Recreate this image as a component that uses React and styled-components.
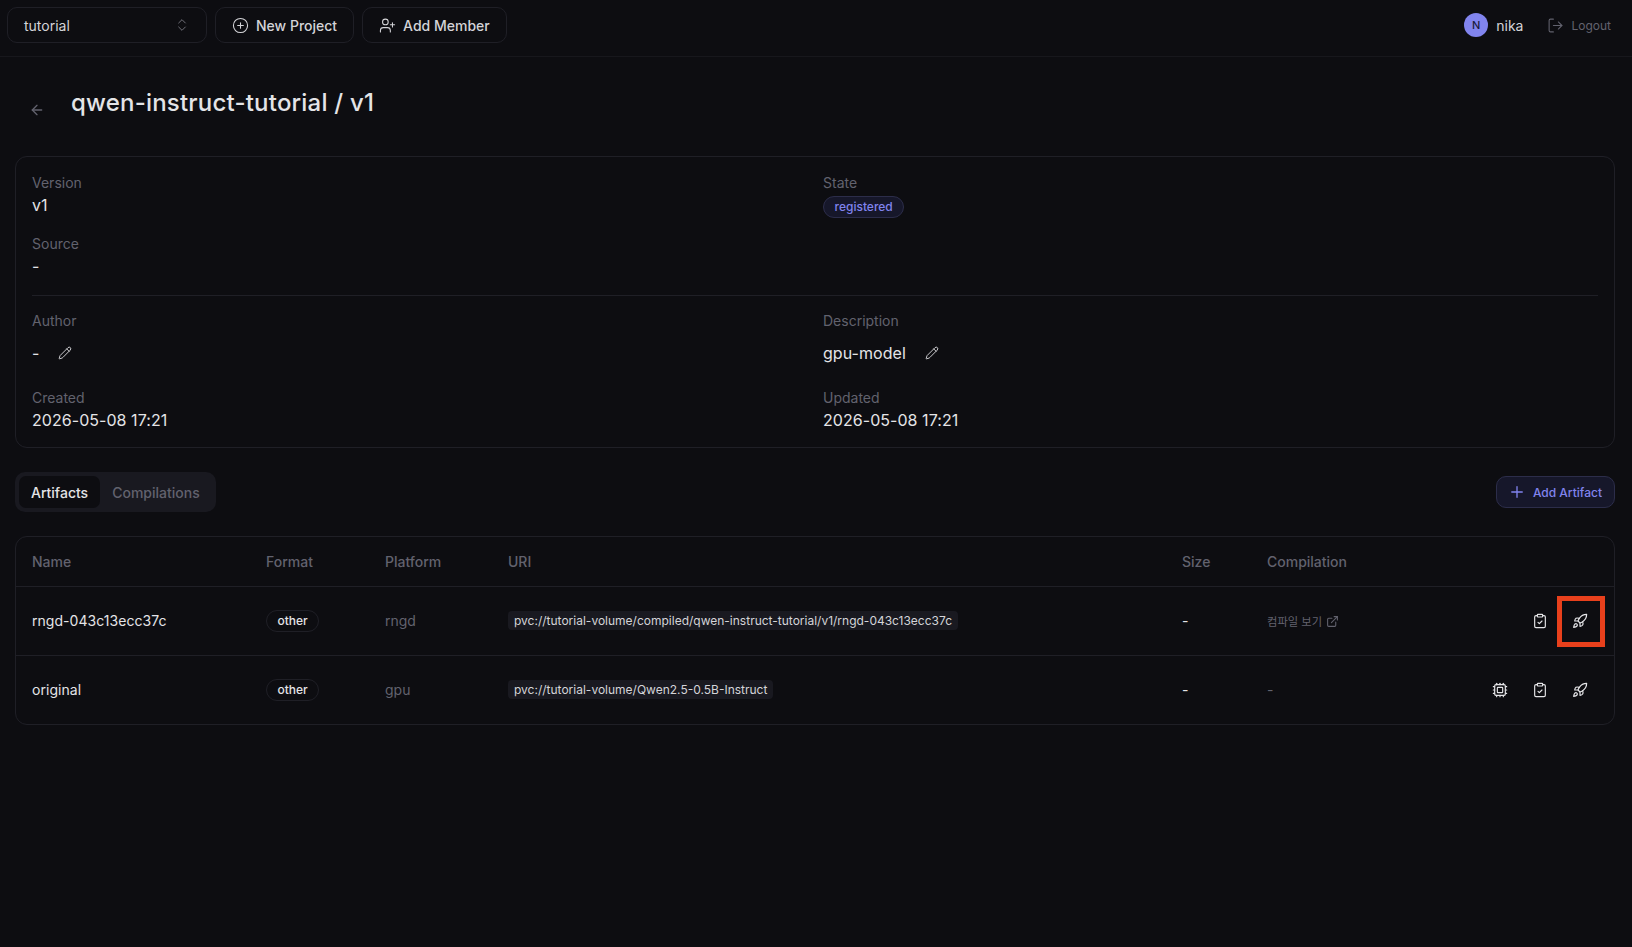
import React from 'react';
import styled, { createGlobalStyle } from 'styled-components';
import {
  ArrowLeft,
  ChevronsUpDown,
  CirclePlus,
  ClipboardCheck,
  Cpu,
  ExternalLink,
  LogOut,
  Pencil,
  Plus,
  Rocket,
  UserPlus,
} from 'lucide-react';

const GlobalStyle = createGlobalStyle`
  html, body {
    margin: 0;
    min-height: 100%;
    background: #0d0d11;
    color: #e4e4e7;
    font-family: Inter, "Noto Sans CJK KR", sans-serif;
  }
  * { box-sizing: border-box; }
`;

const Page = styled.div`
  min-height: 947px;
  background: #0d0d11;
`;

const TopBar = styled.header`
  height: 57px;
  padding: 0 21px 6px 7px;
  display: flex;
  align-items: center;
  gap: 8px;
  border-bottom: 1px solid #17171c;
`;

const BarButton = styled.button`
  height: 36px;
  padding: 0 16px;
  display: flex;
  align-items: center;
  gap: 7px;
  background: transparent;
  border: 1px solid #1f1f26;
  border-radius: 10px;
  color: #d4d4d8;
  font: 500 14px Inter, sans-serif;
`;

const ProjectSelect = styled(BarButton)`
  width: 200px;
  justify-content: space-between;
  font-weight: 400;
`;

const UserBox = styled.div`
  margin-left: auto;
  display: flex;
  align-items: center;
  font-size: 14px;
  color: #d4d4d8;
`;

const Avatar = styled.span`
  width: 24px;
  height: 24px;
  margin-right: 8px;
  border-radius: 50%;
  background: #8184ee;
  color: #1b1b3a;
  display: flex;
  align-items: center;
  justify-content: center;
  font-size: 11px;
  font-weight: 500;
`;

const Logout = styled.span`
  margin-left: 24px;
  display: flex;
  align-items: center;
  gap: 7px;
  color: #62626e;
  font-size: 12px;
`;

const Main = styled.main`
  padding: 0 17px 0 15px;
`;

const TitleRow = styled.div`
  height: 99px;
  padding: 28px 0 0 14px;
  display: flex;
  gap: 26px;
`;

const BackIcon = styled(ArrowLeft)`
  margin-top: 17px;
  color: #62626e;
  flex: none;
`;

const Title = styled.h1`
  margin: 0;
  font-size: 24px;
  line-height: 36px;
  font-weight: 500;
  letter-spacing: 0.2px;
  color: #e4e4e7;
`;

const Card = styled.section`
  height: 292px;
  padding: 16px;
  border: 1px solid #1f1f26;
  border-radius: 12px;
`;

const InfoGrid = styled.div`
  display: grid;
  grid-template-columns: 1fr 1fr;
  column-gap: 16px;
`;

const Divider = styled.hr`
  margin: 16px 0 15px;
  border: 0;
  border-top: 1px solid #1f1f26;
`;

const Field = styled.div`
  height: ${(p) => p.$height}px;
`;

const Label = styled.div`
  font-size: 14px;
  line-height: 20px;
  color: #62626e;
`;

const Value = styled.div`
  font-size: 16px;
  line-height: 24px;
  letter-spacing: 0.05px;
  color: #e4e4e7;
`;

const EditRow = styled(Value)`
  margin-top: 10px;
  display: flex;
  align-items: center;
  gap: 19px;
`;

const StateBadge = styled.span`
  display: inline-block;
  margin-top: 3px;
  padding: 0 10.5px;
  height: 22px;
  line-height: 20px;
  border: 1px solid #2c2d4a;
  border-radius: 11px;
  background: #16172a;
  color: #8184ee;
  font-size: 12px;
  font-weight: 500;
`;

const TabRow = styled.div`
  margin-top: 24px;
  display: flex;
  align-items: center;
  justify-content: space-between;
`;

const Tabs = styled.div`
  height: 40px;
  padding: 4px;
  display: flex;
  background: #191920;
  border-radius: 10px;
`;

const Tab = styled.div`
  padding: 0 12px;
  display: flex;
  align-items: center;
  border-radius: 7px;
  font-size: 14px;
  font-weight: 500;
  color: ${(p) => (p.$active ? '#e4e4e7' : '#62626e')};
  background: ${(p) => (p.$active ? '#0d0d11' : 'transparent')};
`;

const AddArtifact = styled.button`
  height: 32px;
  padding: 0 12px 0 11px;
  display: flex;
  align-items: center;
  gap: 7px;
  background: #16172a;
  border: 1px solid #2c2d4a;
  border-radius: 10px;
  color: #8184ee;
  font: 500 12px Inter, sans-serif;
`;

const TableBox = styled.div`
  margin-top: 24px;
  border: 1px solid #1f1f26;
  border-radius: 12px;
  overflow: hidden;
`;

const Table = styled.table`
  width: 100%;
  border-collapse: collapse;
  table-layout: fixed;
`;

const HeadCell = styled.th`
  height: 49px;
  padding: 0 16px;
  text-align: left;
  font-size: 14px;
  font-weight: 500;
  color: #62626e;
  border-bottom: 1px solid #1f1f26;
`;

const Row = styled.tr`
  height: 69px;
  & + & td {
    border-top: 1px solid #1f1f26;
  }
`;

const Cell = styled.td`
  padding: 0 16px;
  font-size: 14px;
  color: ${(p) => (p.$muted ? '#62626e' : '#e4e4e7')};
`;

const NameCell = styled(Cell)`
  letter-spacing: 0.05px;
`;

const FormatBadge = styled.span`
  display: inline-block;
  height: 22px;
  padding: 0 10.5px;
  line-height: 20px;
  border: 1px solid #1f1f26;
  border-radius: 11px;
  font-size: 12px;
  font-weight: 500;
  color: #e4e4e7;
`;

const UriChip = styled.code`
  display: inline-block;
  height: 19px;
  padding: 0 6px;
  line-height: 19px;
  background: #191920;
  border-radius: 4px;
  font: 400 12px/19px Inter, sans-serif;
  color: #d4d4d8;
`;

const CompileLink = styled.span`
  display: inline-flex;
  align-items: center;
  gap: 4px;
  font-size: 11.3px;
  color: #62626e;
`;

const Actions = styled.div`
  display: flex;
  justify-content: flex-end;
  gap: 8px;
  margin-right: 3px;
`;

const IconButton = styled.span`
  position: relative;
  width: 32px;
  height: 32px;
  display: flex;
  align-items: center;
  justify-content: center;
  color: #e4e4e7;
`;

const Highlight = styled.span`
  position: absolute;
  left: -7px;
  top: -9px;
  width: 48px;
  height: 51px;
  border: 5px solid #e8401c;
`;

const artifacts = [
  {
    name: 'rngd-043c13ecc37c',
    platform: 'rngd',
    uri: 'pvc://tutorial-volume/compiled/qwen-instruct-tutorial/v1/rngd-043c13ecc37c',
    compiled: true,
  },
  {
    name: 'original',
    platform: 'gpu',
    uri: 'pvc://tutorial-volume/Qwen2.5-0.5B-Instruct',
    compiled: false,
  },
];

const columns = [
  { label: 'Name', width: 234 },
  { label: 'Format', width: 119 },
  { label: 'Platform', width: 123 },
  { label: 'URI', width: 674 },
  { label: 'Size', width: 85 },
  { label: 'Compilation', width: 200 },
  { label: '', width: 164 },
];

const App = () => (
  <Page>
    <GlobalStyle />
    <TopBar>
      <ProjectSelect>
        tutorial
        <ChevronsUpDown size={16} color="#71717a" strokeWidth={1.5} />
      </ProjectSelect>
      <BarButton>
        <CirclePlus size={17} strokeWidth={1.5} />
        New Project
      </BarButton>
      <BarButton>
        <UserPlus size={17} strokeWidth={1.5} />
        Add Member
      </BarButton>
      <UserBox>
        <Avatar>N</Avatar>
        nika
        <Logout>
          <LogOut size={17} strokeWidth={1.5} />
          Logout
        </Logout>
      </UserBox>
    </TopBar>
    <Main>
      <TitleRow>
        <BackIcon size={16} />
        <Title>qwen-instruct-tutorial / v1</Title>
      </TitleRow>
      <Card>
        <InfoGrid>
          <div>
            <Field $height={61}>
              <Label>Version</Label>
              <Value>v1</Value>
            </Field>
            <Field $height={45}>
              <Label>Source</Label>
              <Value>-</Value>
            </Field>
          </div>
          <Field>
            <Label>State</Label>
            <StateBadge>registered</StateBadge>
          </Field>
        </InfoGrid>
        <Divider />
        <InfoGrid>
          <div>
            <Field $height={77}>
              <Label>Author</Label>
              <EditRow>
                -
                <Pencil size={14} strokeWidth={1.5} />
              </EditRow>
            </Field>
            <Field>
              <Label>Created</Label>
              <Value>2026-05-08 17:21</Value>
            </Field>
          </div>
          <div>
            <Field $height={77}>
              <Label>Description</Label>
              <EditRow>
                gpu-model
                <Pencil size={14} strokeWidth={1.5} />
              </EditRow>
            </Field>
            <Field>
              <Label>Updated</Label>
              <Value>2026-05-08 17:21</Value>
            </Field>
          </div>
        </InfoGrid>
      </Card>
      <TabRow>
        <Tabs>
          <Tab $active>Artifacts</Tab>
          <Tab>Compilations</Tab>
        </Tabs>
        <AddArtifact>
          <Plus size={18} strokeWidth={1.75} />
          Add Artifact
        </AddArtifact>
      </TabRow>
      <TableBox>
        <Table>
          <colgroup>
            {columns.map((col) => (
              <col key={col.label} width={col.width} />
            ))}
          </colgroup>
          <thead>
            <tr>
              {columns.map((col) => (
                <HeadCell key={col.label}>{col.label}</HeadCell>
              ))}
            </tr>
          </thead>
          <tbody>
            {artifacts.map((item) => (
              <Row key={item.name}>
                <NameCell>{item.name}</NameCell>
                <Cell>
                  <FormatBadge>other</FormatBadge>
                </Cell>
                <Cell $muted>{item.platform}</Cell>
                <Cell>
                  <UriChip>{item.uri}</UriChip>
                </Cell>
                <Cell>-</Cell>
                <Cell $muted>
                  {item.compiled ? (
                    <CompileLink>
                      컴파일 보기
                      <ExternalLink size={13} />
                    </CompileLink>
                  ) : (
                    '-'
                  )}
                </Cell>
                <Cell>
                  <Actions>
                    {!item.compiled && (
                      <IconButton>
                        <Cpu size={16} strokeWidth={1.75} />
                      </IconButton>
                    )}
                    <IconButton>
                      <ClipboardCheck size={16} strokeWidth={1.75} />
                    </IconButton>
                    <IconButton>
                      <Rocket size={16} strokeWidth={1.75} />
                      {item.compiled && <Highlight />}
                    </IconButton>
                  </Actions>
                </Cell>
              </Row>
            ))}
          </tbody>
        </Table>
      </TableBox>
    </Main>
  </Page>
);

export default App;
